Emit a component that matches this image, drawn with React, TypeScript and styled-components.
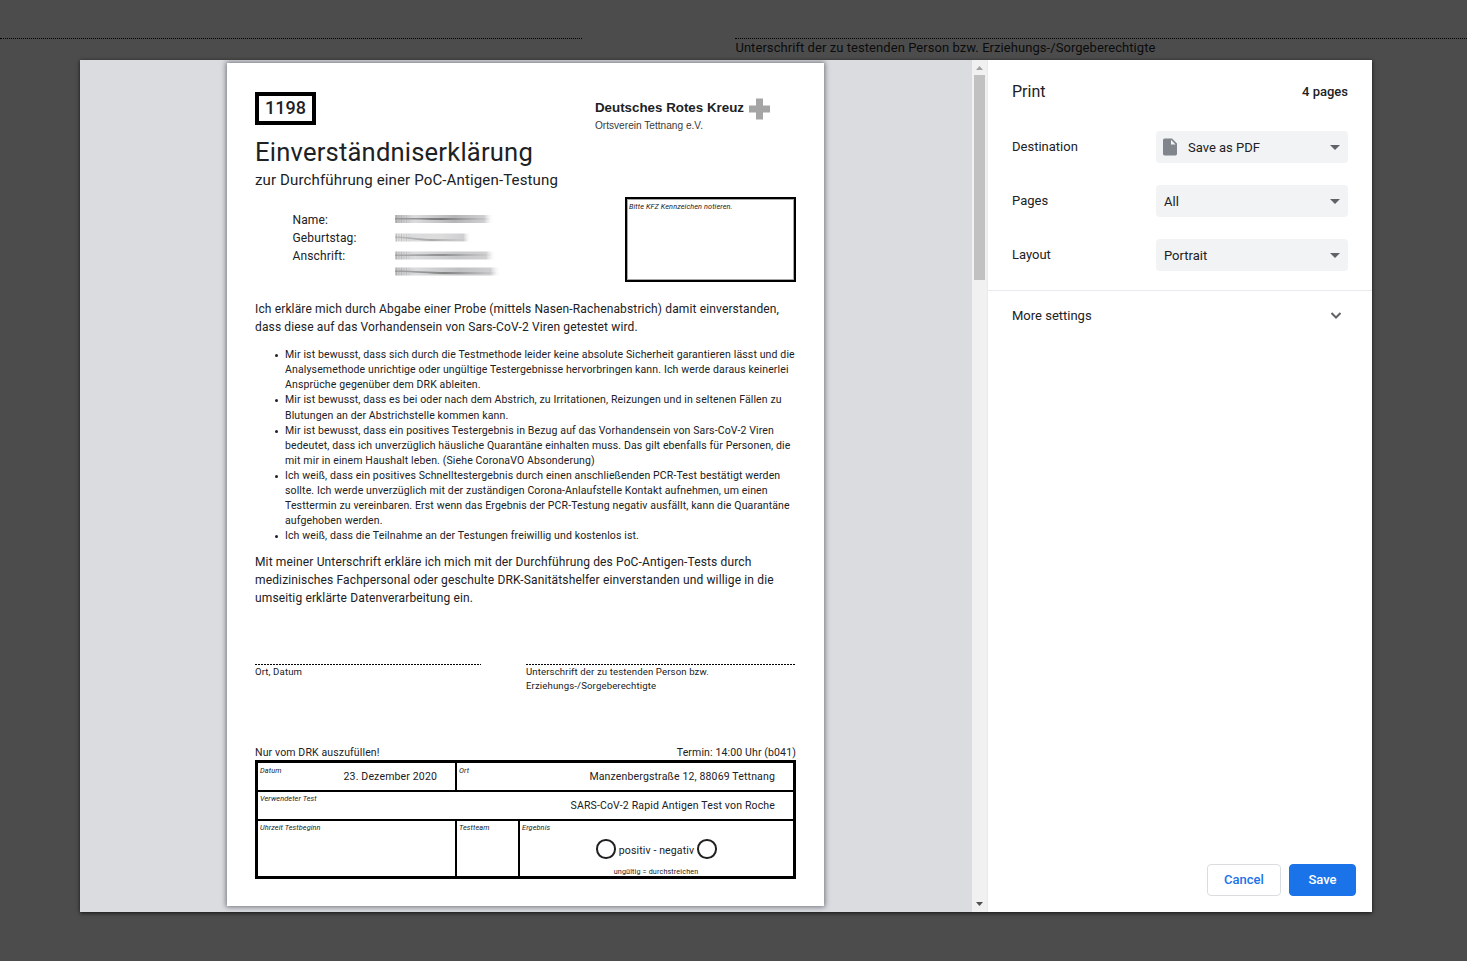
import React from 'react';
import styled, { createGlobalStyle } from 'styled-components';

const GlobalStyle = createGlobalStyle`
  * { box-sizing: border-box; }
  html, body, #root { height: 100%; }
  body { margin: 0; background: #4c4c4c; overflow: hidden; font-family: Roboto, sans-serif; color: #202124; }
  p, h1, h2, ul { margin: 0; padding: 0; font-weight: 400; }
`;

const Screen = styled.div`
  height: 961px;
  overflow: hidden;
  padding-top: 38px;
`;
const BackdropRow = styled.div`
  display: grid;
  grid-template-columns: 582px 732px;
  justify-content: space-between;
  height: 22px;
`;
const BackdropField = styled.div`
  border-top: 1px dotted #000;
  padding-left: 0.4px;
  font-size: 13px;
  line-height: 17px;
  letter-spacing: 0.062px;
  color: #0b0b0b;
  white-space: nowrap;
`;

const Dialog = styled.div`
  display: flex;
  width: 1292px;
  height: 852px;
  margin-left: 80px;
  background: #fff;
  box-shadow: 0 1px 4px rgba(0, 0, 0, 0.75);
`;
const Preview = styled.div`
  flex: 0 0 892px;
  background: #dadce0;
  padding: 3px 0 0 147px;
  overflow: hidden;
`;
const Scrollbar = styled.div`
  display: flex;
  flex-direction: column;
  align-items: center;
  flex: 0 0 15px;
  background: #f1f1f1;
`;
const ScrollButton = styled.div<{ $end?: boolean }>`
  display: flex;
  justify-content: center;
  align-items: center;
  width: 15px;
  height: 15px;
  padding-bottom: ${(p) => (p.$end ? '2px' : '0')};
  margin-top: ${(p) => (p.$end ? 'auto' : '0')};
`;
const Thumb = styled.div`
  width: 11px;
  height: 205px;
  background: #c1c1c1;
`;

const Page = styled.div`
  width: 597px;
  height: 843px;
  padding: 29px 28px 0;
  background: #fff;
  box-shadow: 0 0 5px 1px rgba(60, 60, 70, 0.65);
  white-space: nowrap;
`;
const PageHeader = styled.div`
  display: flex;
  justify-content: space-between;
  height: 33px;
`;
const NumberBox = styled.div`
  width: 61px;
  height: 33px;
  border: 4px solid #000;
  text-align: center;
  font-weight: 500;
  font-size: 18px;
  line-height: 23px;
`;
const Logo = styled.div`
  margin: 6px 26px 0 0;
  font-family: "Liberation Sans", Arial, sans-serif;
`;
const LogoTop = styled.div`
  display: flex;
  height: 21px;
  gap: 5px;
  font-weight: 700;
  font-size: 13.35px;
  line-height: 20px;
`;
const LogoSub = styled.div`
  font-size: 10.15px;
  line-height: 14px;
  color: #3a3a3a;
`;
const Title = styled.h1`
  margin-top: 11px;
  font-size: 25.57px;
  line-height: 32px;
  letter-spacing: 0.2px;
`;
const Subtitle = styled.h2`
  margin-top: 1px;
  font-size: 15.04px;
  line-height: 22px;
  letter-spacing: 0.13px;
`;
const Details = styled.div`
  display: flex;
  justify-content: space-between;
  height: 85px;
  margin-top: 6px;
`;
const Fields = styled.div`
  display: grid;
  grid-template-columns: 102.5px 106px;
  align-content: start;
  padding: 14px 0 0 37.5px;
  font-size: 12.03px;
  line-height: 18px;
  letter-spacing: 0.13px;
`;
const Redacted = styled.svg`
  display: block;
  width: 106px;
  height: 18px;
`;
const Caption = styled.div`
  font-size: 7.3px;
  font-style: italic;
  line-height: 10px;
  letter-spacing: 0.11px;
`;
const PlateBox = styled.div`
  width: 171px;
  border: 2px solid #000;
  box-shadow: inset 0 0 0 1px rgba(0, 0, 0, 0.35);
  padding: 3px 2px;
`;
const Paragraph = styled.p<{ $gap: number }>`
  margin-top: ${(p) => p.$gap}px;
  font-size: 12.03px;
  line-height: 18px;
  letter-spacing: 0.13px;
`;
const Terms = styled.ul`
  margin-top: 11.21px;
  padding-left: 30px;
  list-style: none;
  font-size: 10.53px;
  line-height: 15.08px;
  letter-spacing: 0.13px;
`;
const Term = styled.li`
  display: flex;

  &::before {
    content: "";
    flex: none;
    width: 3px;
    height: 3px;
    margin: 7px 7px 0 -10px;
    border-radius: 50%;
    background: #202124;
  }
`;
const Signatures = styled.div`
  display: grid;
  grid-template-columns: 226px 270px;
  justify-content: space-between;
  height: 29px;
  margin-top: 57px;
  font-size: 9.6px;
  line-height: 14px;
  letter-spacing: 0.125px;
`;
const SignatureField = styled.div`
  &::before {
    content: "";
    display: block;
    height: 1px;
    background: repeating-linear-gradient(90deg, #000 0 2px, #fff 2px 3px);
  }
`;
const StaffLine = styled.div`
  display: flex;
  justify-content: space-between;
  margin-top: 52px;
  font-size: 10.53px;
  line-height: 15px;
  letter-spacing: 0.13px;
`;
const StaffTable = styled.div`
  height: 119px;
  border: 3px solid #000;
`;
const StaffRow = styled.div<{ $columns: string; $height: number; $last?: boolean }>`
  display: grid;
  grid-template-columns: ${(p) => p.$columns};
  height: ${(p) => p.$height}px;
  border-bottom: ${(p) => (p.$last ? 'none' : '2px solid #000')};
`;
const Cell = styled.div<{ $top: number; $divider?: boolean }>`
  display: flex;
  justify-content: space-between;
  padding: ${(p) => p.$top}px 18px 0 2px;
  border-right: ${(p) => (p.$divider ? '2px solid #000' : 'none')};
`;
const ResultCell = styled.div`
  padding: 2px 0 0 2px;
`;
const CellValue = styled.div<{ $top: number }>`
  padding-top: ${(p) => p.$top}px;
  font-size: 10.53px;
  line-height: 16px;
  letter-spacing: 0.15px;
`;
const Choice = styled.div`
  display: flex;
  justify-content: center;
  align-items: center;
  gap: 3px;
  height: 20px;
  margin-top: 6px;
  padding-right: 2px;
  font-size: 10.53px;
  letter-spacing: 0.13px;
`;
const ChoiceText = styled.span`
  padding-top: 3px;
`;
const Circle = styled.span`
  width: 19.5px;
  height: 19.5px;
  border: 2px solid #202020;
  border-radius: 50%;
`;
const Note = styled.div`
  margin-top: 8px;
  padding-right: 3px;
  text-align: center;
  font-size: 7.2px;
  line-height: 9px;
  letter-spacing: 0.15px;
`;

const Sidebar = styled.div`
  display: flex;
  flex-direction: column;
  flex: 1;
  border-left: 1px solid #e8eaed;
  font-size: 13px;
`;
const SidebarHeader = styled.div`
  display: flex;
  justify-content: space-between;
  padding: 22px 24px 0;
  height: 71px;
  line-height: 19px;
`;
const SidebarTitle = styled.div`
  font-size: 16px;
`;
const PageCount = styled.div`
  font-weight: 500;
`;
const Setting = styled.div`
  display: flex;
  justify-content: space-between;
  height: 32px;
  margin: 0 24px 22px;
  line-height: 31px;
`;
const Select = styled.div`
  display: flex;
  align-items: center;
  width: 192px;
  height: 32px;
  padding: 0 8px 0 8px;
  border-radius: 4px;
  background: #f1f3f4;
`;
const SelectText = styled.span`
  padding-top: 1px;
  line-height: 32px;
`;
const FileIcon = styled.svg`
  margin: 0 11px 0 -1px;
`;
const Caret = styled.svg`
  margin-left: auto;
`;
const MoreSettings = styled.div`
  display: flex;
  justify-content: space-between;
  align-items: center;
  height: 50px;
  margin-top: -3px;
  padding: 0 30px 0 24px;
  border-top: 1px solid #e8eaed;
`;
const Actions = styled.div`
  display: flex;
  justify-content: flex-end;
  gap: 8px;
  margin-top: auto;
  padding: 16px;
`;
const Button = styled.button<{ $primary?: boolean }>`
  width: ${(p) => (p.$primary ? 67 : 74)}px;
  height: 32px;
  padding: 0 0 1px;
  border: 1px solid ${(p) => (p.$primary ? '#1a73e8' : '#dadce0')};
  border-radius: 4px;
  background: ${(p) => (p.$primary ? '#1a73e8' : '#fff')};
  color: ${(p) => (p.$primary ? '#fff' : '#1a73e8')};
  font: 500 13px Roboto, sans-serif;
`;

const terms: string[][] = [
  [
    'Mir ist bewusst, dass sich durch die Testmethode leider keine absolute Sicherheit garantieren lässt und die',
    'Analysemethode unrichtige oder ungültige Testergebnisse hervorbringen kann. Ich werde daraus keinerlei',
    'Ansprüche gegenüber dem DRK ableiten.',
  ],
  [
    'Mir ist bewusst, dass es bei oder nach dem Abstrich, zu Irritationen, Reizungen und in seltenen Fällen zu',
    'Blutungen an der Abstrichstelle kommen kann.',
  ],
  [
    'Mir ist bewusst, dass ein positives Testergebnis in Bezug auf das Vorhandensein von Sars-CoV-2 Viren',
    'bedeutet, dass ich unverzüglich häusliche Quarantäne einhalten muss. Das gilt ebenfalls für Personen, die',
    'mit mir in einem Haushalt leben. (Siehe CoronaVO Absonderung)',
  ],
  [
    'Ich weiß, dass ein positives Schnelltestergebnis durch einen anschließenden PCR-Test bestätigt werden',
    'sollte. Ich werde unverzüglich mit der zuständigen Corona-Anlaufstelle Kontakt aufnehmen, um einen',
    'Testtermin zu vereinbaren. Erst wenn das Ergebnis der PCR-Testung negativ ausfällt, kann die Quarantäne',
    'aufgehoben werden.',
  ],
  ['Ich weiß, dass die Teilnahme an der Testungen freiwillig und kostenlos ist.'],
];

function Lines({ lines }: { lines: string[] }) {
  return (
    <>
      {lines.map((line, i) => (
        <React.Fragment key={line}>
          {i > 0 && <br />}
          {line}
        </React.Fragment>
      ))}
    </>
  );
}

/* A smudged-out value: a grey bar with a soft darker streak, fading out at its right end. */
function Smudge({ id, width, y, tone, streak, strength }: { id: string; width: number; y: number; tone: string; streak: number; strength: number }) {
  return (
    <Redacted viewBox="0 0 106 18">
      <defs>
        <linearGradient id={`${id}-bar`}>
          <stop offset="0" stopColor={tone} stopOpacity="0.9" />
          <stop offset="0.2" stopColor="#dadbdd" />
          <stop offset="0.6" stopColor={tone} />
          <stop offset="0.9" stopColor="#cfcfd1" />
          <stop offset="1" stopColor="#fff" stopOpacity="0" />
        </linearGradient>
        <linearGradient id={`${id}-streak`}>
          <stop offset="0" stopColor="#777" stopOpacity="0.7" />
          <stop offset="0.5" stopColor="#666" />
          <stop offset="1" stopColor="#999" stopOpacity="0.1" />
        </linearGradient>
        <filter id={`${id}-blur`} x="-5%" y="-40%" width="110%" height="180%">
          <feGaussianBlur stdDeviation="0.7" />
        </filter>
      </defs>
      <g filter={`url(#${id}-blur)`}>
        <rect x="0" y={y} width={width} height="8" fill={`url(#${id}-bar)`} />
        <path
          d={`M0 ${y + 3}C${width * 0.2} ${y + 3} ${width * 0.3} ${y + streak} ${width * 0.5} ${y + streak}H${width * 0.95}V${y + streak + 2}H${width * 0.5}C${width * 0.3} ${y + streak + 2} ${width * 0.2} ${y + 4.5} 0 ${y + 4.5}z`}
          fill={`url(#${id}-streak)`}
          opacity={strength}
        />
      </g>
      {[1, 3.5, 6, 8.5, 11, 13.5].map((x, i) => (
        <rect key={x} x={x} y={y} width="0.9" height="8" fill={i % 2 ? '#b9a994' : '#8f939c'} opacity={0.5 - i * 0.06} />
      ))}
    </Redacted>
  );
}

function DownCaret() {
  return (
    <Caret width="10" height="5" viewBox="0 0 10 5">
      <path d="M0 0h10L5 5z" fill="#5f6368" />
    </Caret>
  );
}

export default function App() {
  return (
    <Screen>
      <GlobalStyle />
      <BackdropRow>
        <BackdropField />
        <BackdropField>Unterschrift der zu testenden Person bzw. Erziehungs-/Sorgeberechtigte</BackdropField>
      </BackdropRow>
      <Dialog>
        <Preview>
          <Page>
            <PageHeader>
              <NumberBox>1198</NumberBox>
              <Logo>
                <LogoTop>
                  Deutsches Rotes Kreuz
                  <svg width="21" height="22" viewBox="0 -0.5 21 22">
                    <path d="M7 0h7v7h7v7h-7v7H7v-7H0V7h7z" fill="#a5a5a5" />
                  </svg>
                </LogoTop>
                <LogoSub>Ortsverein Tettnang e.V.</LogoSub>
              </Logo>
            </PageHeader>
            <Title>Einverständniserklärung</Title>
            <Subtitle>zur Durchführung einer PoC-Antigen-Testung</Subtitle>
            <Details>
              <Fields>
                <span>Name:</span>
                <Smudge id="name" width={99} y={4} tone="#b4b5b7" streak={3} strength={0.8} />
                <span>Geburtstag:</span>
                <Smudge id="birth" width={76} y={4.5} tone="#dcdcdc" streak={5.5} strength={0.45} />
                <span>Anschrift:</span>
                <Smudge id="street" width={101} y={4.5} tone="#c6c7c9" streak={2.5} strength={0.6} />
                <span />
                <Smudge id="city" width={106} y={2.5} tone="#bfc0c2" streak={4.5} strength={0.7} />
              </Fields>
              <PlateBox>
                <Caption>Bitte KFZ Kennzeichen notieren.</Caption>
              </PlateBox>
            </Details>
            <Paragraph $gap={18}>
              <Lines
                lines={[
                  'Ich erkläre mich durch Abgabe einer Probe (mittels Nasen-Rachenabstrich) damit einverstanden,',
                  'dass diese auf das Vorhandensein von Sars-CoV-2 Viren getestet wird.',
                ]}
              />
            </Paragraph>
            <Terms>
              {terms.map((lines) => (
                <Term key={lines[0]}>
                  <span>
                    <Lines lines={lines} />
                  </span>
                </Term>
              ))}
            </Terms>
            <Paragraph $gap={9.75}>
              <Lines
                lines={[
                  'Mit meiner Unterschrift erkläre ich mich mit der Durchführung des PoC-Antigen-Tests durch',
                  'medizinisches Fachpersonal oder geschulte DRK-Sanitätshelfer einverstanden und willige in die',
                  'umseitig erklärte Datenverarbeitung ein.',
                ]}
              />
            </Paragraph>
            <Signatures>
              <SignatureField>Ort, Datum</SignatureField>
              <SignatureField>
                <Lines lines={['Unterschrift der zu testenden Person bzw.', 'Erziehungs-/Sorgeberechtigte']} />
              </SignatureField>
            </Signatures>
            <StaffLine>
              <span>Nur vom DRK auszufüllen!</span>
              <span>Termin: 14:00 Uhr (b041)</span>
            </StaffLine>
            <StaffTable>
              <StaffRow $columns="199px 1fr" $height={29}>
                <Cell $top={3} $divider>
                  <Caption>Datum</Caption>
                  <CellValue $top={3}>23. Dezember 2020</CellValue>
                </Cell>
                <Cell $top={3}>
                  <Caption>Ort</Caption>
                  <CellValue $top={3}>Manzenbergstraße 12, 88069 Tettnang</CellValue>
                </Cell>
              </StaffRow>
              <StaffRow $columns="1fr" $height={29}>
                <Cell $top={2}>
                  <Caption>Verwendeter Test</Caption>
                  <CellValue $top={4}>SARS-CoV-2 Rapid Antigen Test von Roche</CellValue>
                </Cell>
              </StaffRow>
              <StaffRow $columns="199px 63px 1fr" $height={55} $last>
                <Cell $top={2} $divider>
                  <Caption>Uhrzeit Testbeginn</Caption>
                </Cell>
                <Cell $top={2} $divider>
                  <Caption>Testteam</Caption>
                </Cell>
                <ResultCell>
                  <Caption>Ergebnis</Caption>
                  <Choice>
                    <Circle />
                    <ChoiceText>positiv - negativ</ChoiceText>
                    <Circle />
                  </Choice>
                  <Note>ungültig = durchstreichen</Note>
                </ResultCell>
              </StaffRow>
            </StaffTable>
          </Page>
        </Preview>
        <Scrollbar>
          <ScrollButton>
            <svg width="7" height="4" viewBox="0 0 7 4">
              <path d="M3.5 0L7 4H0z" fill="#a3a3a3" />
            </svg>
          </ScrollButton>
          <Thumb />
          <ScrollButton $end>
            <svg width="7" height="4" viewBox="0 0 7 4">
              <path d="M0 0h7L3.5 4z" fill="#505050" />
            </svg>
          </ScrollButton>
        </Scrollbar>
        <Sidebar>
          <SidebarHeader>
            <SidebarTitle>Print</SidebarTitle>
            <PageCount>4 pages</PageCount>
          </SidebarHeader>
          <Setting>
            <span>Destination</span>
            <Select>
              <FileIcon width="14" height="18" viewBox="0 0 14 18">
                <path d="M1.8 0.5H9L14 5.6V15.8a1.6 1.6 0 0 1-1.6 1.6H1.6A1.6 1.6 0 0 1 0 15.8V2.2A1.7 1.7 0 0 1 1.8 0.5z" fill="#80868b" />
                <path d="M8 1.8V6.4H12.6z" fill="#f1f3f4" />
              </FileIcon>
              <SelectText>Save as PDF</SelectText>
              <DownCaret />
            </Select>
          </Setting>
          <Setting>
            <span>Pages</span>
            <Select>
              <SelectText>All</SelectText>
              <DownCaret />
            </Select>
          </Setting>
          <Setting>
            <span>Layout</span>
            <Select>
              <SelectText>Portrait</SelectText>
              <DownCaret />
            </Select>
          </Setting>
          <MoreSettings>
            <span>More settings</span>
            <svg width="12" height="8" viewBox="0 0.5 12 8">
              <path d="M1.5 1.5L6 6l4.5-4.5" fill="none" stroke="#5f6368" strokeWidth="2" />
            </svg>
          </MoreSettings>
          <Actions>
            <Button>Cancel</Button>
            <Button $primary>Save</Button>
          </Actions>
        </Sidebar>
      </Dialog>
    </Screen>
  );
}
